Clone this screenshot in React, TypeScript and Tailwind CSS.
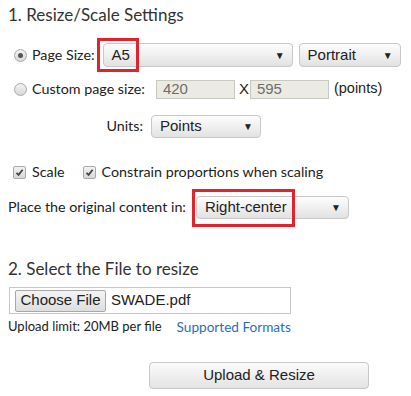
import React from "react";

const lato = { fontFamily: "Lato, 'Open Sans', sans-serif" } as React.CSSProperties;
const arial = { fontFamily: "'Liberation Sans', Arial, sans-serif" } as React.CSSProperties;

function Radio({ checked }: { checked?: boolean }) {
  return (
    <div className="w-[13px] h-[13px] rounded-full border border-[#a9a9a9] bg-gradient-to-b from-[#f2f2f2] to-[#d8d8d8] flex items-center justify-center shrink-0">
      {checked && <div className="w-[5px] h-[5px] rounded-full bg-[#555]" />}
    </div>
  );
}

function Check() {
  return (
    <div className="w-[13px] h-[13px] rounded-[2px] border border-[#a9a9a9] bg-gradient-to-b from-[#f2f2f2] to-[#d8d8d8] flex items-center justify-center shrink-0">
      <svg width="9" height="9" viewBox="0 0 9 9">
        <path d="M1.5 4.8 L3.6 6.8 L7.6 1.8" stroke="#444" strokeWidth="1.8" fill="none" />
      </svg>
    </div>
  );
}

function Select({ text, className }: { text: string; className: string }) {
  return (
    <div
      className={`flex items-center justify-between rounded-[4px] border border-[#c8c8c8] bg-gradient-to-b from-[#fdfdfd] to-[#e2e2e2] pl-[8px] pr-[7px] text-[15px] text-[#222] ${className}`}
      style={arial}
    >
      <span>{text}</span>
      <span className="text-[10px] text-[#222]">▼</span>
    </div>
  );
}

export default function App() {
  return (
    <div className="w-[411px] h-[396px] bg-white pl-[8px] text-[#222]" style={lato}>
      <div className="h-[30px] flex items-center text-[17px] text-[#333]">1. Resize/Scale Settings</div>

      <div className="mt-[12px] h-[26px] flex items-center text-[14.3px]">
        <div className="ml-[6px]"><Radio checked /></div>
        <span className="ml-[5px]">Page Size:</span>
        <div className="relative ml-[8px]">
          <Select text="A5" className="w-[190px] h-[24px]" />
          <div className="absolute left-[-6px] top-[-5px] w-[42px] h-[34px] border-[3px] border-[#e2232b]" />
        </div>
        <Select text="Portrait" className="ml-[6px] w-[102px] h-[24px]" />
      </div>

      <div className="mt-[10px] h-[22px] flex items-center text-[14.3px]">
        <div className="ml-[6px]"><Radio /></div>
        <span className="ml-[5px]">Custom page size:</span>
        <div
          className="ml-[11px] w-[79px] h-[19px] border border-[#c9c9c1] bg-[#ebebe4] text-[15px] text-[#6d6d6d] pl-[6px] flex items-center"
          style={arial}
        >
          420
        </div>
        <span className="ml-[4px] w-[11px] text-[15px]" style={arial}>X</span>
        <div
          className="w-[79px] h-[19px] border border-[#c9c9c1] bg-[#ebebe4] text-[15px] text-[#6d6d6d] pl-[6px] flex items-center"
          style={arial}
        >
          595
        </div>
        <span className="ml-[5px] text-[14.5px]" style={arial}>(points)</span>
      </div>

      <div className="mt-[14px] h-[24px] flex items-center text-[14.3px]">
        <span className="w-[135px] text-right">Units:</span>
        <Select text="Points" className="ml-[8px] w-[110px] h-[23px]" />
      </div>

      <div className="mt-[24px] h-[20px] flex items-center text-[14.3px]">
        <div className="ml-[5px]"><Check /></div>
        <span className="ml-[6px]">Scale</span>
        <div className="ml-[18px]"><Check /></div>
        <span className="ml-[6px]">Constrain proportions when scaling</span>
      </div>

      <div className="mt-[13px] h-[24px] flex items-center text-[14.3px]">
        <span>Place the original content in:</span>
        <div className="relative ml-[10px]">
          <Select text="Right-center" className="w-[153px] h-[23px]" />
          <div className="absolute left-[-4px] top-[-7px] w-[103px] h-[38px] border-[3px] border-[#e2232b]" />
        </div>
      </div>

      <div className="mt-[35px] h-[30px] flex items-center text-[17px] text-[#333]">2. Select the File to resize</div>

      <div className="mt-[3px] ml-[1px] w-[282px] h-[27px] border border-[#c8c8c8] flex items-center pl-[5px] text-[15px]" style={arial}>
        <div className="w-[91px] h-[22px] rounded-[2px] border border-[#a8a8a8] bg-gradient-to-b from-[#f4f4f4] to-[#dedede] flex items-center justify-center">
          Choose File
        </div>
        <span className="ml-[5px]">SWADE.pdf</span>
      </div>

      <div className="mt-[4px] h-[18px] flex items-center text-[13px]">
        <span>Upload limit: 20MB per file</span>
        <span className="ml-[15px] text-[13.6px] text-[#2a6ebb]">Supported Formats</span>
      </div>

      <div className="mt-[26px] ml-[141px] w-[220px] h-[27px] rounded-[4px] border border-[#c8c8c8] bg-gradient-to-b from-[#fbfbfb] to-[#e3e3e3] flex items-center justify-center text-[15px]" style={arial}>
        Upload &amp; Resize
      </div>
    </div>
  );
}
